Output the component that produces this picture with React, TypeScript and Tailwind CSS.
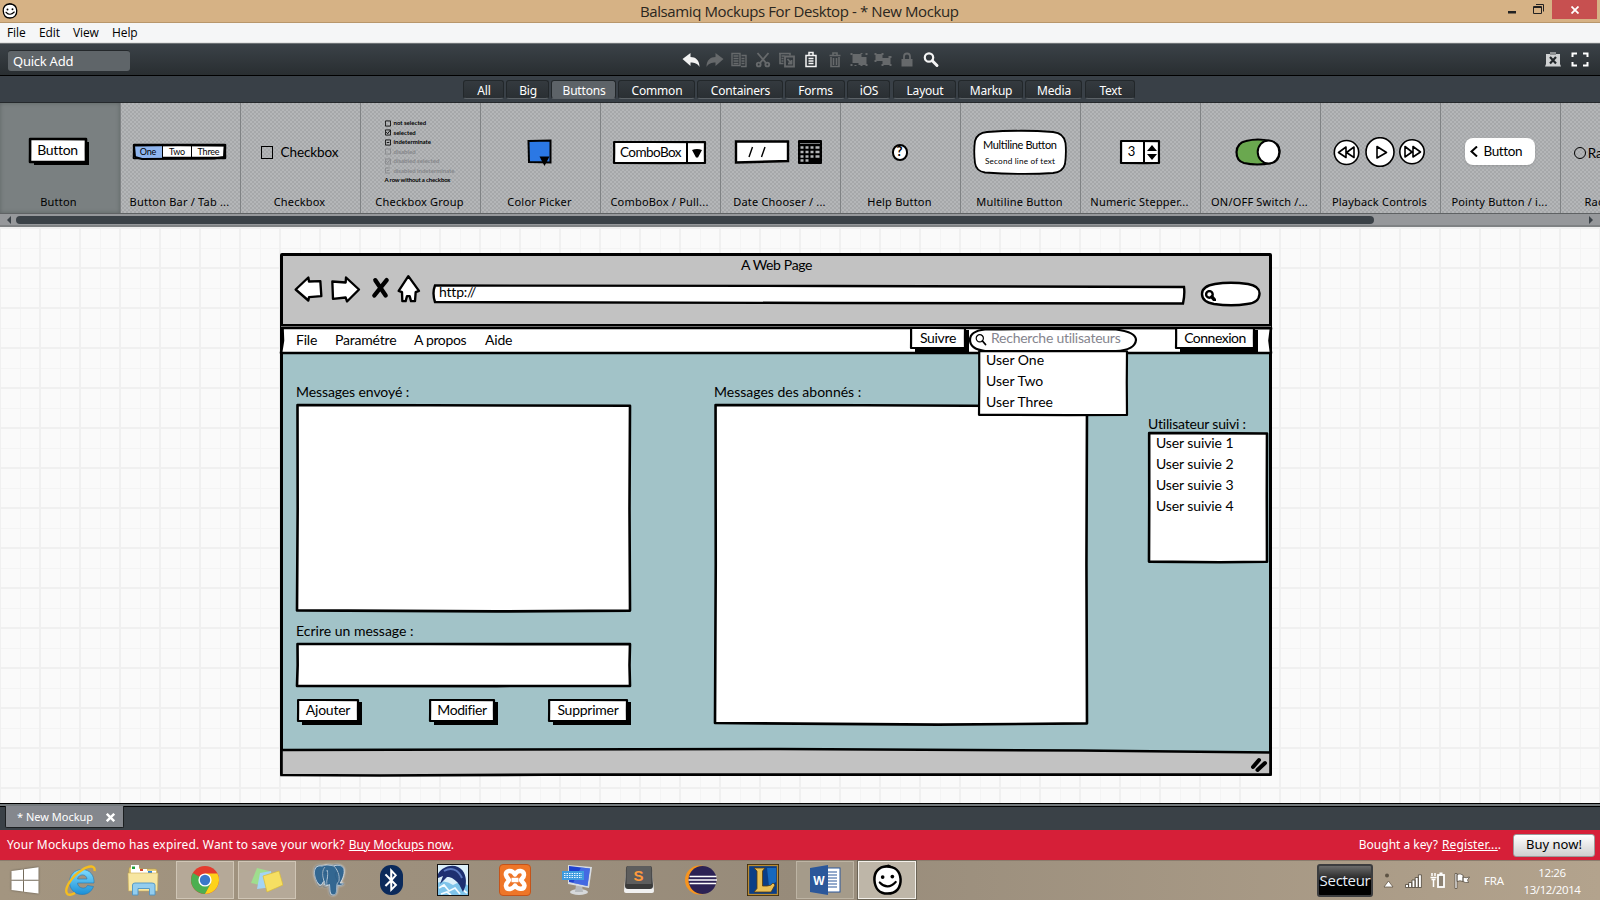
import React from 'react';
import type { ReactNode } from 'react';
import { SiPostgresql } from 'react-icons/si';
import { FaBluetoothB } from 'react-icons/fa';

const HAND = "font-['Lato','Liberation_Sans',sans-serif]";

/* Hand-drawn rectangle that stretches to its container. */
function Outline({ fill = '#fff', weight = 2.6 }: { fill?: string; weight?: number }) {
  return (
    <svg className="absolute inset-0 h-full w-full overflow-visible" viewBox="0 0 100 100" preserveAspectRatio="none">
      <path
        d="M0.150 0L40 0.100L100 0.400L99.850 50L100 99.800L60 100.200L0 99.700L0.200 50Z"
        fill={fill}
        stroke="#000"
        strokeWidth={weight}
        strokeLinejoin="round"
        vectorEffect="non-scaling-stroke"
      />
    </svg>
  );
}

function Note({ at, children }: { at: string; children: ReactNode }) {
  return <div className={`absolute whitespace-nowrap text-sm leading-5 text-black ${at}`}>{children}</div>;
}

function SketchButton({ at, text, children }: { at: string; text: string; children: ReactNode }) {
  return (
    <div className={`absolute ${at}`}>
      <div className="absolute top-[2px] -right-[4px] -bottom-[4px] left-[4px] bg-black" />
      <Outline weight={2.2} />
      <div className={`relative flex h-full items-center justify-center pb-px text-sm leading-5 whitespace-nowrap ${text}`}>{children}</div>
    </div>
  );
}

function Smiley({ size }: { size: string }) {
  return (
    <svg className={size} viewBox="0 0 32 32">
      <path d="M15 2C7 2 2 8 2.500 16C3 25 8 30 16 30C25 30 30 24 29.500 15C29 7 24 2 15 2Z" fill="#fff" stroke="#000" strokeWidth="2.600" />
      <path d="M13 2L17 0.800L21 3" fill="none" stroke="#000" strokeWidth="1.500" />
      <circle cx="11" cy="13" r="1.900" />
      <circle cx="21" cy="12.500" r="1.900" />
      <path d="M8 18.500Q16 27 24.500 18" fill="none" stroke="#000" strokeWidth="2.200" strokeLinecap="round" />
    </svg>
  );
}

/* ---------- toolbar ---------- */

const DIM = '#66696b';
const tools: ReactNode[] = [
  <path key="undo" d="M1 9L9 3V7C14 7 18 10 18 17C16 13.500 13 12.500 9 12.500V16Z" fill="#f2f2f2" />,
  <path key="redo" d="M18 9L10 3V7C5 7 1 10 1 17C3 13.500 6 12.500 10 12.500V16Z" fill={DIM} />,
  <g key="copy" fill="none" stroke={DIM} strokeWidth="1.400">
    <path d="M2.500 3.500H10.500V15.500H2.500ZM12 5.500H16.500V16.500H11.500M4 6H9M4 8.500H9M4 11H9M4 13.500H9M12 8.500H15M12 11H15M12 13.500H15" />
  </g>,
  <g key="cut" fill="none" stroke={DIM} strokeWidth="1.900">
    <path d="M4 3L12.500 13M15 3L6.500 13" />
    <circle cx="5.200" cy="14.500" r="1.900" />
    <circle cx="13.800" cy="14.500" r="1.900" />
  </g>,
  <g key="duplicate" fill="none" stroke={DIM} strokeWidth="1.600">
    <path d="M1.500 3.500H12.500V5.500M2.500 3.500V13.500H6M4 6H7M4 8.500H6M4 11H6" />
    <path d="M7.500 6.500H16.500V16.500H7.500ZM10 9L14 13.500M14 10V13.500H10.500" strokeWidth="1.800" />
  </g>,
  <g key="paste" fill="none" stroke="#f4f4f4" strokeWidth="1.500">
    <path d="M4.500 5.500H14.500V16.500H4.500Z" />
    <path d="M7.500 5V2.500H11.500V5M7 8.500H12M7 11H12M7 13.500H12" />
  </g>,
  <g key="trash" fill="none" stroke={DIM} strokeWidth="1.600">
    <path d="M4 5.500H15M7.500 5V3H11.500V5M5.500 7V16.500H13.500V7M8 8V15M11 8V15" />
  </g>,
  <g key="group" fill={DIM}>
    <path d="M3 4H12V13H3ZM9 7H17V15H9Z" />
    <path d="M1 3H3V5H1ZM16 3H18V5H16ZM1 14H3V16H1ZM16 14H18V16H16ZM11 3H13V4H11ZM5 15H7V16H5ZM11 15H13V16H11Z" />
  </g>,
  <g key="ungroup" fill={DIM}>
    <path d="M2 4H9V11H2ZM9 8H17V15H9Z" />
    <path d="M1 3H3V5H1ZM8 3H10V5H8ZM1 10H3V12H1ZM15 6H18V8H15ZM8 14H10V16H8ZM16 14H18V16H16Z" />
  </g>,
  <g key="lock">
    <path d="M4 9H15V16.500H4Z" fill={DIM} />
    <path d="M6.500 9V6.500C6.500 2.500 12.500 2.500 12.500 6.500V9" fill="none" stroke={DIM} strokeWidth="1.800" />
  </g>,
  <g key="find" fill="none" stroke="#f4f4f4">
    <circle cx="7.500" cy="7.500" r="4.200" strokeWidth="2.200" />
    <path d="M10.800 10.800L15.500 15.500" strokeWidth="3" strokeLinecap="round" />
  </g>,
];

/* ---------- category tabs ---------- */

const tabs: [string, string][] = [
  ['All', 'ml-[463px] w-[41px]'],
  ['Big', 'ml-[2px] w-[43px]'],
  ['Buttons', 'ml-[2px] w-[65px]'],
  ['Common', 'ml-[2px] w-[77px]'],
  ['Containers', 'ml-[2px] w-[86px]'],
  ['Forms', 'ml-[2px] w-[60px]'],
  ['iOS', 'ml-[2px] w-[43px]'],
  ['Layout', 'ml-[3px] w-[63px]'],
  ['Markup', 'ml-[2px] w-[65px]'],
  ['Media', 'ml-[2px] w-[57px]'],
  ['Text', 'ml-[3px] w-[50px]'],
];

/* ---------- palette ---------- */

const groupRows: [string, string, boolean][] = [
  ['not selected', '', false],
  ['selected', 'M1.500 3L3 5L6 1', false],
  ['indeterminate', 'M2 3.500H5', false],
  ['disabled', '', true],
  ['disabled selected', 'M1.500 3L3 5L6 1', true],
  ['disabled indeterminate', 'M2 3.500H5', true],
];

const palette: [string, ReactNode][] = [
  [
    'Button',
    <div className="relative -mt-0.5 -ml-0.5 h-[23px] w-[56px]">
      <div className="absolute top-[3px] -right-[3px] -bottom-[3px] left-[4px] bg-black" />
      <Outline />
      <div className="relative text-center text-sm leading-[22px] tracking-[-0.3px]">Button</div>
    </div>,
  ],
  [
    'Button Bar / Tab ...',
    <div className="relative h-[13px] w-[91px]">
      <Outline />
      <div className="relative flex h-full text-center text-[9px] leading-[13px] tracking-[-0.2px]">
        <span className="w-[29px] border-r border-black bg-[#8fb5ee]">One</span>
        <span className="w-[29px] border-r border-black">Two</span>
        <span className="grow">Three</span>
      </div>
      <svg className="absolute inset-0 h-full w-full overflow-visible" viewBox="0 0 91 13">
        <path d="M0 0.500L45 0L91 0.500L90 12L80 13.500L8 14L1 12Z" fill="none" stroke="#000" strokeWidth="2" />
      </svg>
    </div>,
  ],
  [
    'Checkbox',
    <div className="flex items-center gap-2 pt-px text-[13.5px] tracking-[-0.1px]">
      <div className="h-[13px] w-[12px] border-[1.500px] border-black" />
      Checkbox
    </div>,
  ],
  [
    'Checkbox Group',
    <div className="flex w-[70px] flex-col text-[6px] leading-[9.500px] font-bold whitespace-nowrap">
      {groupRows.map(([t, d, off]) => (
        <div key={t} className={off ? 'flex items-center gap-[3px] text-[#85878a]' : 'flex items-center gap-[3px]'}>
          <svg className="h-[7px] w-[6px]" viewBox="0 0 7 7" fill="none" stroke="currentColor">
            <path d="M0.500 0.500H6.500V6.500H0.500Z" />
            <path d={d} />
          </svg>
          {t}
        </div>
      ))}
      <div className="tracking-[-0.15px]">A row without a checkbox</div>
    </div>,
  ],
  [
    'Color Picker',
    <svg className="mt-px h-[27px] w-[25px]" viewBox="0 0 25 27">
      <path d="M1.500 2L23.500 1.500V23.500L2 23Z" fill="#2b78e4" stroke="#000" strokeWidth="2" />
      <path d="M12.500 17.500H22.500L17.500 27Z" />
    </svg>,
  ],
  [
    'ComboBox / Pull...',
    <div className="relative mt-px h-[21px] w-[91px]">
      <Outline weight={2.2} />
      <div className="relative flex h-full text-[13.5px] leading-[20px] tracking-[-0.55px]">
        <span className="w-[74px] border-r-2 border-black pl-[6px]">ComboBox</span>
        <svg className="mt-[7px] ml-[4px] h-[9px] w-[10px]" viewBox="0 0 10 9">
          <path d="M0 1Q5 -1 10 1L6 8.500H4Z" />
        </svg>
      </div>
    </div>,
  ],
  [
    'Date Chooser / ...',
    <svg className="mt-px -ml-1 h-[26px] w-[88px]" viewBox="0 0 88 26">
      <path d="M2 2.500L54 2.500L54 22L2 23.500Z" fill="#fff" stroke="#000" strokeWidth="2.400" />
      <path d="M18.500 8L15 18M31 8L27.500 18" stroke="#000" strokeWidth="1.400" />
      <rect x="64" y="1" width="24" height="24" rx="1" />
      <path d="M66.500 8.500h3M71.500 8.500h3M76.500 8.500h3M81.500 8.500h4M66.500 13h3M71.500 13h3M76.500 13h3M81.500 13h4M66.500 17.500h3M71.500 17.500h3M76.500 17.500h3M81.500 17.500h4M66.500 21.500h3M71.500 21.500h3" stroke="#b3b5b7" strokeWidth="2.400" />
      <path d="M66 4.500H86" stroke="#77797b" strokeWidth="1" />
    </svg>,
  ],
  [
    'Help Button',
    <div className="relative mt-px flex h-[17px] w-[16px] items-center justify-center rounded-full border-2 border-black bg-white text-[13px] font-bold">?</div>,
  ],
  [
    'Multiline Button',
    <svg className="mt-px h-[46px] w-[94px]" viewBox="0 0 94 46">
      <path d="M14 3Q50 0.500 80 3Q91 4 92.500 14Q93.500 24 92 35Q90 43 80 44Q50 46 12 43.500Q3 42 2 34Q0.500 22 2 12Q4 4 14 3Z" fill="#fff" stroke="#000" strokeWidth="1.800" />
      <text x="47" y="20" textAnchor="middle" fontSize="11" textLength="74">Multiline Button</text>
      <text x="47" y="35" textAnchor="middle" fontSize="8.200" textLength="70">Second line of text</text>
    </svg>,
  ],
  [
    'Numeric Stepper...',
    <div className="relative mt-px h-[22px] w-[38px]">
      <Outline weight={2.2} />
      <div className="relative flex h-full text-[13px] leading-[21px]">
        <span className="w-[24px] border-r-2 border-black text-center">3</span>
        <svg className="mt-[4px] ml-[2px] h-[15px] w-[10px]" viewBox="0 0 10 15">
          <path d="M0 6L5 0L10 6ZM0 9H10L5 15Z" />
        </svg>
      </div>
    </div>,
  ],
  [
    'ON/OFF Switch /...',
    <svg className="mt-px -ml-1 h-[28px] w-[46px]" viewBox="0 0 46 28">
      <path d="M11 3Q23 0 35 3Q45 5 44.500 14Q44 24 36 25Q22 28 9 25Q1.500 23 1.500 14Q2 5 11 3Z" fill="#6aa84f" stroke="#000" strokeWidth="2.200" />
      <ellipse cx="33.500" cy="14" rx="10.800" ry="11.500" fill="#fff" stroke="#000" strokeWidth="2" />
    </svg>,
  ],
  [
    'Playback Controls',
    <svg className="mt-px h-[31px] w-[93px]" viewBox="0 0 93 31" fill="#fff" stroke="#000" strokeWidth="1.600" strokeLinejoin="round">
      <ellipse cx="13.500" cy="15.500" rx="12.200" ry="12" />
      <ellipse cx="47" cy="15" rx="14" ry="14.300" />
      <ellipse cx="79" cy="14.800" rx="12.200" ry="12" />
      <path d="M13 10L5.500 15.500L13 20.500ZM21 10L13.500 15.500L21 20.500ZM44 9.500L53.500 15.500L44 21ZM72 9.500V20L79 15ZM80 9.500V20L87.500 15Z" />
    </svg>,
  ],
  [
    'Pointy Button / i...',
    <div className="flex h-[27px] w-[70px] items-center gap-[6px] rounded-[8px] bg-white pl-[5px] text-[13.500px] tracking-[-0.4px] shadow">
      <svg className="h-[11px] w-[8px]" viewBox="0 0 8 11" fill="none" stroke="#000" strokeWidth="2">
        <path d="M7 0.500L1.500 5.500L7 10.500" />
      </svg>
      Button
    </div>,
  ],
  [
    'Radio Button',
    <div className="flex items-center gap-[2px] pt-[3px] text-[13.500px] whitespace-nowrap">
      <div className="h-[12px] w-[12px] rounded-full border border-black" />
      Radio Button
    </div>,
  ],
];

/* ---------- taskbar icons ---------- */

const apps: [ReactNode, string][] = [
  [
    <svg className="h-8 w-8" viewBox="0 0 32 32">
      <defs>
        <linearGradient id="ie" x1="0" y1="0" x2="0" y2="1">
          <stop offset="0" stopColor="#7fdcff" />
          <stop offset="1" stopColor="#1b8fd6" />
        </linearGradient>
      </defs>
      <path d="M29 19H12.500C13 25 21 25.500 22.500 21.500L28.500 22.500C26 29 21 30.500 17 30.500C9 30.500 4.500 24.500 4.500 18C4.500 11 9.500 5.500 17 5.500C25 5.500 29.500 11.500 29 19ZM12.500 15H22C21.500 9.500 13.500 9.500 12.500 15Z" fill="url(#ie)" stroke="#2278b5" strokeWidth="0.600" />
      <path d="M29.500 7C30.500 2 25 0.500 17 6C6 13 -1 25 2 29.500C3 31.500 7 31 10 29" fill="none" stroke="#f5bd1f" strokeWidth="2.400" />
    </svg>,
    '',
  ],
  [
    <svg className="h-8 w-8" viewBox="0 0 32 32">
      <path d="M2 5Q2 3 4 3H12L14 5H28Q30 5 30 7V26H2Z" fill="#e8cf78" stroke="#b99a44" strokeWidth="0.600" />
      <path d="M4 1H12V5H20V7H29V10H4Z" fill="#fff" />
      <path d="M5 2.500H8V5H5Z" fill="#1da03c" />
      <path d="M13 5H16V7H13Z" fill="#d4482b" />
      <path d="M21 7H25V9H21Z" fill="#2f87d8" />
      <path d="M1 9H31L30.500 27H1.500Z" fill="#f7e6a1" stroke="#c9ac58" strokeWidth="0.600" />
      <path d="M5.500 31V21Q5.500 19 8 19H25Q28 19 28 21V31H22.500V24.500H11V31Z" fill="#93cdee" stroke="#4d94c4" strokeWidth="0.900" />
    </svg>,
    '',
  ],
  [
    <svg className="h-[30px] w-[30px]" viewBox="0 0 30 30">
      <circle cx="15" cy="15" r="14" fill="#e33b2e" />
      <path d="M15 15L2.900 8A14 14 0 0 0 15 29L21 18.500Z" fill="#4caf50" />
      <path d="M15 8.500H27.400A14 14 0 0 1 15 29L21 18Z" fill="#fdd21b" />
      <circle cx="15" cy="15" r="6.600" fill="#fff" />
      <circle cx="15" cy="15" r="5.200" fill="#3a78c9" />
    </svg>,
    'border border-[#cfc5b5] bg-[#b5a998]',
  ],
  [
    <svg className="h-7 w-8" viewBox="0 0 32 28">
      <path d="M6 2L18 5L14 20L0 17Z" fill="#9fdd8e" />
      <path d="M9 7L20 5L22 21L6 23Z" fill="#a3d4f4" />
      <path d="M12 10L28 5L32 19L16 26Z" fill="#f6df62" stroke="#d8ba3a" strokeWidth="0.700" />
    </svg>,
    'border border-[#cfc5b5] bg-[#b5a998]',
  ],
  [
    <div className="grid h-8 w-8 drop-shadow-[0_0_1px_#e9edf0]">
      <svg className="col-start-1 row-start-1 h-8 w-8" viewBox="0 0 32 32" fill="#336791" stroke="#d9e2ea" strokeWidth="0.800">
        <path d="M9 2C3 1 1 5 1.500 10C2 15 5 21 7.500 21C9.500 21 10 17 11 17L12 19Q10 21 14 21.500L16.500 20.500C17 25 16.500 31 20 31C24 31 23.500 27 24 21C27 22 29 21 30.500 20C30 18.500 28 19.500 27 19C30 15 32 8 30.500 4C28.500 1 24 0.500 21 2C17 1 13 0.500 9 2Z" />
        <path d="M11 17C9 12 9 6 12 3M21 2C24 5 27 11 26 17C25 19 24 19 24 21M14 21.500C13 15 16 13 14 6" fill="none" />
      </svg>
      <SiPostgresql className="col-start-1 row-start-1 h-8 w-8 text-[#274f74] opacity-30" />
    </div>,
    '',
  ],
  [
    <div className="flex h-[30px] w-[23px] items-center justify-center rounded-[11px] bg-[#0b2a5b]">
      <FaBluetoothB className="h-[24px] w-[18px] text-white" />
    </div>,
    '',
  ],
  [
    <svg className="h-8 w-8" viewBox="0 0 32 32">
      <rect width="32" height="32" fill="#dcf0fa" />
      <path d="M0 19Q8 15 16 21Q24 16 32 22V32H0Z" fill="#7fc4ea" />
      <path d="M2 24L7 21L12 27L18 24L23 30M4 30L10 28L14 31M26 26L30 29" stroke="#f3fbff" strokeWidth="1.800" fill="none" />
      <path d="M1 10C5 3 14 0 21 3C28 6 30 15 28.500 22L26 28L22.500 21C20 17 16 14 12 13L10 13L3 20L6 12L1 14Z" fill="#1d2f70" />
      <path d="M7 7C14 3 21 5 25 14" stroke="#5c79bf" strokeWidth="2" fill="none" />
      <rect x="0.500" y="0.500" width="31" height="31" fill="none" stroke="#111" />
    </svg>,
    '',
  ],
  [
    <div className="flex h-8 w-8 items-center justify-center rounded-[4px] border border-[#c4541a] bg-[#ee7628]">
      <svg className="h-6 w-6" viewBox="0 0 24 24" fill="none" stroke="#fff" strokeWidth="4.500" strokeLinejoin="round">
        <path d="M12 6.500C9 1 2 2.500 3 7C3.500 9.500 6 11 6 12C6 13 2.500 15 3 18C4 23 10 21 12 17.500C14 21 21 22.500 21.500 17.500C21.500 15 18 13 18 12C18 11 21 9.500 21 7C21 2.500 15 1 12 6.500ZM8.500 12H15.500" />
      </svg>
    </div>,
    '',
  ],
  [
    <svg className="h-8 w-8" viewBox="0 0 32 32">
      <ellipse cx="18" cy="28" rx="9" ry="3" fill="#d7d9db" />
      <path d="M15 21H21L22 28H14Z" fill="#b7babd" />
      <path d="M7 1L31 3L28 24L7 20Z" fill="#d8dce1" />
      <path d="M8 2L29 4.500L26.500 22L8 18Z" fill="#1f41cf" />
      <path d="M20 3.500L29 4.500L26.500 22L12 19Z" fill="#5d84ef" opacity="0.600" />
      <rect x="1" y="7" width="22" height="9" fill="#3f9bdf" />
      <path d="M3 9.500H21M3 11.500H21M3 13.500H21" stroke="#e9f5ff" strokeDasharray="1.500 1" />
    </svg>,
    '',
  ],
  [
    <svg className="h-8 w-8" viewBox="0 0 32 32">
      <path d="M3 7L1 27Q1 29 3 29H29Q31 29 31 27L29 7Z" fill="#f1f1f1" />
      <path d="M5 2H27Q29 2 29 5L30 22Q30 25 27 25H5Q2 25 2 22L3 5Q3 2 5 2Z" fill="#3a3a3a" />
      <path d="M5 2H27Q28.500 2 28.500 5L28.500 20H3.500L3.500 5Q3.500 2 5 2Z" fill="#5d5d5d" />
      <text x="15.500" y="17" textAnchor="middle" fontFamily="Liberation Sans" fontWeight="700" fontSize="15" fill="#ff9a3c">S</text>
    </svg>,
    '',
  ],
  [
    <svg className="h-8 w-8" viewBox="0 0 32 32">
      <circle cx="14.500" cy="16" r="14.500" fill="#f7941e" />
      <circle cx="17.500" cy="16" r="14" fill="#2c2255" />
      <path d="M4.500 12.500H31.500M3.500 16H32M4.500 19.500H31" stroke="#fff" strokeWidth="1.600" />
    </svg>,
    '',
  ],
  [
    <svg className="h-8 w-8" viewBox="0 0 32 32">
      <rect width="32" height="32" fill="#3a2a10" />
      <rect x="1.500" y="1.500" width="29" height="29" fill="#0b3e86" stroke="#b98b32" strokeWidth="1.300" />
      <path d="M20 4H29V18L22 22Z" fill="#1668bd" />
      <path d="M7 4H18L15.500 7V22H20Q24 22 26 19L28 21L24 28H7L10 24.500V7Z" fill="#e9bf55" stroke="#5a3c0c" strokeWidth="0.800" />
    </svg>,
    '',
  ],
  [
    <svg className="h-8 w-8" viewBox="0 0 32 32">
      <rect x="15" y="4" width="16" height="24" fill="#fff" stroke="#2b579a" />
      <path d="M18 8H28M18 11H28M18 14H28M18 17H28M18 20H28M18 23H28" stroke="#2b579a" strokeWidth="1.200" />
      <path d="M1 4L19 1V31L1 28Z" fill="#2b579a" />
      <text x="9.800" y="20.500" textAnchor="middle" fontFamily="Liberation Sans" fontWeight="700" fontSize="12" fill="#fff">W</text>
    </svg>,
    'border border-[#bdb4a4] bg-[#a59b8a]',
  ],
  [<Smiley size="h-[32px] w-[31px]" />, 'border border-[#f3f0ea] bg-[#beb6a8] outline outline-[#6b6456]'],
];

function Magnifier({ at, weight }: { at: string; weight: number }) {
  return (
    <svg className={`absolute ${at}`} viewBox="0 0 12 12" fill="none" stroke="#000" strokeWidth={weight} strokeLinecap="round">
      <circle cx="4.800" cy="4.800" r="3.600" />
      <path d="M7.500 7.500L10.500 11" strokeWidth={weight * 1.500} />
    </svg>
  );
}

function Canvas() {
  return (
    <main
      className={`relative h-[577px] overflow-hidden bg-[#fafafa] bg-[linear-gradient(#f0f0f0_2px,transparent_2px),linear-gradient(90deg,#f0f0f0_2px,transparent_2px),linear-gradient(#f4f4f4_1px,transparent_1px),linear-gradient(90deg,#f4f4f4_1px,transparent_1px)] bg-[size:40px_40px,40px_40px,20px_20px,20px_20px] bg-[position:0_0,-1px_0,0_1px,0_0] ${HAND}`}
    >
      {/* browser window */}
      <div className="absolute top-[26px] left-[280px] h-[523px] w-[992px] rounded-[2px] border-[3px] border-black bg-[#a2c3c8]" />
      <div className="absolute top-[29px] left-[283px] h-[69px] w-[986px] bg-[#c2c2c2]" />
      <svg className="absolute top-[518px] left-[280px] h-[32px] w-[992px] overflow-visible" viewBox="0 0 992 32">
        <path d="M1.500 5L500 4L800 5.500L990.500 7.500V29.500L700 29.500L300 29.500L100 30.500L1.500 30Z" fill="#c2c2c2" stroke="#000" strokeWidth="2.600" />
        <path d="M973 22L979 15M977.500 25L985 18" stroke="#000" strokeWidth="4" strokeLinecap="round" />
      </svg>
      <Note at="top-[28px] left-[741px] tracking-[-0.35px]">A Web Page</Note>
      <svg className="absolute top-[47px] left-[293px] h-[31px] w-[130px]" viewBox="70 101.500 390 93" fill="#fff" stroke="#000" strokeWidth="7" strokeLinejoin="round" strokeLinecap="round">
        <path d="M78 148L116 112L118 124L152 123L155 168L118 171L116 181Z" />
        <path d="M188 124L228 127L229 112L268 148L232 184L228 172L190 176Z" />
        <path d="M317 120L348 166M351 120L314 166" strokeWidth="13" />
        <path d="M416 108L448 152L438 156L436 183H424L420 168H412L408 183H398L397 156L387 152Z" />
      </svg>
      <svg className="absolute top-[57px] left-[432px] h-[21px] w-[754px]" viewBox="0 0 754 21">
        <path d="M3 1.500L400 2L752 3Q753 10 751 19.500L400 19L3 18Q0 9 3 1.500Z" fill="#fff" stroke="#000" strokeWidth="2.400" />
      </svg>
      <Note at="top-[55px] left-[439px] tracking-[-0.2px]">http://</Note>
      <svg className="absolute top-[54px] left-[1200px] h-[26px] w-[61px]" viewBox="0 0 61 26">
        <path d="M15 3Q30 0.500 48 3Q60 5 59.500 13Q59 22 47 23Q32 25.500 14 23Q2 21 2 13Q2 5 15 3Z" fill="#fff" stroke="#000" strokeWidth="2.400" />
      </svg>
      <Magnifier at="top-[63px] left-[1205px] h-[11px] w-[11px]" weight={2.6} />

      {/* menu bar */}
      <div className="absolute top-[101px] left-[281px] h-[25px] w-[990px]">
        <Outline weight={2.600} />
      </div>
      <div className="absolute top-[97px] left-[281px] h-[2px] w-[990px] bg-black" />
      <div className="absolute top-[99px] left-[281px] h-px w-[990px] bg-[#6a6a6a]" />
      <Note at="top-[103px] left-[296px] tracking-[-0.2px]">File</Note>
      <Note at="top-[103px] left-[335px] tracking-[-0.2px]">Paramétre</Note>
      <Note at="top-[103px] left-[414px] tracking-[-0.35px]">A propos</Note>
      <Note at="top-[103px] left-[485px] tracking-[-0.2px]">Aide</Note>
      <SketchButton at="top-[101px] left-[911px] h-[20px] w-[54px]" text="tracking-[-0.3px]">Suivre</SketchButton>
      <svg className="absolute top-[101px] left-[968px] h-[25px] w-[170px]" viewBox="0 0 170 25">
        <path d="M17 1.500Q80 0.500 148 1.500Q168 4 168 12Q167 22 148 23H17Q2 21 2 12Q2 3 17 1.500Z" fill="#fff" stroke="#000" strokeWidth="2.200" />
      </svg>
      <Magnifier at="top-[106px] left-[975px] h-[13px] w-[12px]" weight={1.200} />
      <Note at="top-[101px] left-[991px] tracking-[-0.25px] text-[#85858e]!">Recherche utilisateurs</Note>
      <SketchButton at="top-[101px] left-[1176px] h-[20px] w-[78px]" text="tracking-[-0.5px]">Connexion</SketchButton>

      {/* message columns */}
      <Note at="top-[155px] left-[296px] tracking-[-0.1px]">Messages envoyé :</Note>
      <div className="absolute top-[178px] left-[297px] h-[206px] w-[333px]">
        <Outline />
      </div>
      <Note at="top-[394px] left-[296px]">Ecrire un message :</Note>
      <div className="absolute top-[417px] left-[297px] h-[42px] w-[333px]">
        <Outline />
      </div>
      <SketchButton at="top-[473px] left-[298px] h-[21px] w-[60px]" text="tracking-[-0.25px]">Ajouter</SketchButton>
      <SketchButton at="top-[473px] left-[430px] h-[21px] w-[64px]" text="tracking-[-0.4px]">Modifier</SketchButton>
      <SketchButton at="top-[473px] left-[549px] h-[21px] w-[78px]" text="tracking-[-0.25px]">Supprimer</SketchButton>

      <Note at="top-[155px] left-[714px]">Messages des abonnés :</Note>
      <div className="absolute top-[178px] left-[715px] h-[319px] w-[372px]">
        <Outline />
      </div>

      {/* search suggestions */}
      <div className="absolute top-[124px] left-[979px] h-[64px] w-[148px]">
        <Outline weight={2.2} />
        <div className="relative -top-[2px] pl-[7px] text-sm leading-[21px]">
          <div>User One</div>
          <div>User Two</div>
          <div>User Three</div>
        </div>
      </div>

      {/* followed users */}
      <Note at="top-[187px] left-[1148px] tracking-[-0.2px]">Utilisateur suivi :</Note>
      <div className="absolute top-[206px] left-[1149px] h-[129px] w-[118px]">
        <Outline />
        <div className="relative -top-px pl-[7px] text-sm leading-[21px] tracking-[-0.1px]">
          <div>User suivie 1</div>
          <div>User suivie 2</div>
          <div>User suivie 3</div>
          <div>User suivie 4</div>
        </div>
      </div>
    </main>
  );
}

export default function App() {
  return (
    <div className="flex h-[900px] w-[1600px] flex-col overflow-hidden bg-[#3a4147] font-['Noto_Sans','Open_Sans',sans-serif]">
      {/* title bar */}
      <header className="relative flex h-[23px] shrink-0 items-center border-b border-[#b8976c] bg-[#d6b285] pl-[2px]">
        <Smiley size="h-[16px] w-[16px]" />
        <h1 className="ml-[622px] font-['Open_Sans'] text-[15px] leading-5 tracking-[-0.4px] whitespace-nowrap text-[#2a2620]">
          Balsamiq Mockups For Desktop - * New Mockup
        </h1>
        <div className="ml-auto flex h-full items-start">
          <svg className="h-[19px] w-[44px]" viewBox="0 0 44 19">
            <path d="M0 11H8V13.500H0Z" fill="#222" />
            <path d="M25.500 6.500H33.500V13.500H25.500ZM25.500 7.500H33M28 4.500H35.500V11.500" fill="none" stroke="#222" />
          </svg>
          <div className="mr-[3px] flex h-[19px] w-[45px] items-center justify-center bg-[#c75050]">
            <svg className="h-[8px] w-[8px]" viewBox="0 0 8 8" stroke="#fff" strokeWidth="1.800">
              <path d="M0.500 0.500L7.500 7.500M7.500 0.500L0.500 7.500" />
            </svg>
          </div>
        </div>
      </header>

      <nav className="relative h-[20px] shrink-0 border-b border-[#e3e3e3] bg-[#f5f6f7] font-['Open_Sans'] text-xs leading-[19px] tracking-[-0.1px] text-black">
        <div className="flex pl-[7px]">
          <span className="w-[32px]">File</span>
          <span className="w-[34px]">Edit</span>
          <span className="w-[39px]">View</span>
          <span>Help</span>
        </div>
      </nav>

      {/* toolbar */}
      <div className="flex h-[33px] shrink-0 items-center border-t border-b border-t-[#6d7275] border-b-black bg-linear-to-b from-[#3b4248] to-[#292e31] pl-[8px]">
        <div className="mt-px h-[21px] w-[122px] rounded-[3px] border-t border-[#24282b] bg-[#5f6569] pl-[5px] text-[13px] leading-[20px] tracking-[-0.25px] text-white">
          Quick Add
        </div>
        <div className="ml-[549px] flex">
          {tools.map((tool, i) => (
            <svg key={i} className="h-[20px] w-[24px]" viewBox="-2.500 0 24 20">
              {tool}
            </svg>
          ))}
        </div>
        <div className="mr-[11px] ml-auto flex gap-[10px]">
          <svg className="h-[15px] w-[16px]" viewBox="0 0 16 15">
            <path d="M1 2H15V12L16 14.500H0L1 12Z" fill="#cfd1d2" />
            <rect x="5" y="0" width="6" height="3" fill="#8e9193" />
            <path d="M5 5L11 11.500M11 5L5 11.500" stroke="#23282b" strokeWidth="2.200" />
          </svg>
          <svg className="h-[15px] w-[18px]" viewBox="0 0 18 15" fill="none" stroke="#fff" strokeWidth="2">
            <path d="M1.500 5V1.500H6M12 1.500H16.500V5M16.500 10V13.500H12M6 13.500H1.500V10" />
          </svg>
        </div>
      </div>

      {/* categories */}
      <div className="flex h-[27px] shrink-0 border-b border-[#25292c] bg-[#394047] pt-[4px]">
        {tabs.map(([name, box]) => (
          <div
            key={name}
            className={`h-[19px] shrink-0 rounded-[3px] border border-[#22272a] border-b-[#5c6267] pl-px text-center text-xs leading-[20px] tracking-[-0.2px] text-white ${box} ${
              name === 'Buttons' ? 'bg-[#5d6368]' : 'bg-linear-to-b from-[#343a3f] to-[#2a2f33]'
            }`}
          >
            {name}
          </div>
        ))}
      </div>

      {/* widget palette */}
      <div className="flex h-[111px] shrink-0 overflow-hidden border-b border-[#5f6264] bg-[#adafb1] bg-[conic-gradient(#a6a8aa_25%,#b4b6b8_0_50%,#a6a8aa_0_75%,#b4b6b8_0)] bg-[size:4px_4px]">
        {palette.map(([name, art], i) => (
          <div
            key={name}
            className={`flex h-full w-[120px] shrink-0 flex-col border-r border-[#808385] pr-px ${i === 0 ? 'w-[121px]! bg-[#7a8081] pr-[2px]! shadow-[inset_0_0_4px_#5e6465]' : ''}`}
          >
            <div className={`flex h-[91px] items-center justify-center pt-[6px] pr-px text-black ${HAND}`}>{art}</div>
            <div className="pr-px text-center text-[11px] leading-[16px] tracking-[0.2px] whitespace-nowrap text-black">{name}</div>
          </div>
        ))}
      </div>

      <div className="flex h-[13px] shrink-0 items-center border-b-2 border-[#7f8284] bg-[#96989b] px-[7px]">
        <svg className="h-[8px] w-[4px]" viewBox="0 0 4 8" fill="#3a4147">
          <path d="M4 0V8L0 4Z" />
        </svg>
        <div className="ml-[5px] h-[8px] w-[1358px] rounded-full bg-[#3a4147]" />
        <svg className="ml-auto h-[8px] w-[4px]" viewBox="0 0 4 8" fill="#3a4147">
          <path d="M0 0V8L4 4Z" />
        </svg>
      </div>

      <Canvas />

      {/* document tabs */}
      <div className="flex h-[27px] shrink-0 flex-col bg-[#3a4147]">
        <div className="h-[4px] shrink-0 border-t border-b border-black bg-[#747a7d]" />
        <div className="-mt-px ml-[5px] flex h-[22px] w-[119px] items-center rounded-b-[2px] border border-t-0 border-[#1b1e20] bg-[#84878d] pt-px pl-[11px] text-[11px] text-white">
          * New Mockup
          <svg className="ml-[13px] h-[9px] w-[9px]" viewBox="0 0 9 9" stroke="#fff" strokeWidth="2.400">
            <path d="M0.800 0.800L8.200 8.200M8.200 0.800L0.800 8.200" />
          </svg>
        </div>
      </div>

      {/* licence banner */}
      <div className="flex h-[30px] shrink-0 items-center bg-[#d61f38] pl-[7px] text-xs text-white">
        <span className="tracking-[0.18px]">Your Mockups demo has expired. Want to save your work?</span>
        <span className="ml-[4px]">
          <span className="underline">Buy Mockups now</span>.
        </span>
        <span className="mr-[4px] ml-auto">Bought a key?</span>
        <span className="tracking-[0.15px] underline">Register...</span>
        <span>.</span>
        <div className="mr-[5px] ml-[12px] flex h-[23px] w-[82px] items-center justify-center rounded-[3px] border border-[#9b9b9b] bg-linear-to-b from-white to-[#cfcfcf] text-[13px] text-black">
          Buy now!
        </div>
      </div>

      {/* taskbar */}
      <footer className="flex h-[40px] shrink-0 border-t border-[#8c7c6d] bg-linear-to-r from-[#a39580] via-[#978b7a] to-[#b3a38d]">
        <div className="flex w-[52px] items-center pl-[11px]">
          <svg className="h-[27px] w-[28px] drop-shadow-[0_0_1px_#5c5548]" viewBox="0 0 28 27" fill="#fff">
            <path d="M0.500 4L12 2.400V12.800H0.500ZM13 2.200L27.500 0.200V12.800H13ZM0.500 13.800H12V24.500L0.500 22.900ZM13 13.800H27.500V26.500L13 24.700Z" />
          </svg>
        </div>
        <div className="flex gap-[4px]">
          {apps.map(([icon, box], i) => (
            <div key={i} className={`flex h-[38px] w-[58px] items-center justify-center ${box}`}>
              {icon}
            </div>
          ))}
        </div>
        <div className="ml-auto flex items-center text-white">
          <div className="flex h-[33px] w-[56px] items-center justify-center rounded-[3px] border-2 border-[#3c3d3f] bg-linear-to-b from-[#6b6b6b] from-0% via-[#222] via-49% to-black to-50% font-['Open_Sans'] text-[15px] tracking-[-0.3px] text-[#e8eef8]">
            Secteur
          </div>
          <svg className="ml-[10px] h-[18px] w-[11px]" viewBox="0 0 11 18">
            <circle cx="4" cy="3.500" r="2" fill="#5d5344" />
            <path d="M1 15L5.500 9L10 15Z" fill="#fff" stroke="#54493a" strokeWidth="0.700" />
          </svg>
          <svg className="ml-[11px] h-[14px] w-[17px]" viewBox="0 0 17 14" fill="#fff" stroke="#4c4437" strokeWidth="0.800">
            <path d="M0.500 10.500H3.500V13.500H0.500ZM3.700 8.500H6.700V13.500H3.700ZM7 6H10V13.500H7ZM10.200 3.500H13.200V13.500H10.200ZM13.400 0.800H16.400V13.500H13.400Z" />
          </svg>
          <svg className="ml-[8px] h-[17px] w-[16px]" viewBox="0 0 16 17">
            <rect x="8" y="3" width="6" height="12" fill="#8b8172" stroke="#fff" strokeWidth="1.800" />
            <rect x="9.500" y="0.500" width="3" height="2" fill="#fff" />
            <path d="M2 1V4M5 1V4M0.500 5.500H6.500M1.500 7.500H5.500M3.500 8V15" fill="none" stroke="#fff" strokeWidth="1.500" />
          </svg>
          <svg className="ml-[8px] h-[16px] w-[16px]" viewBox="0 0 16 16" fill="#fff" stroke="#4c4437" strokeWidth="0.700">
            <path d="M1 0.500H3V15.500H1ZM3 1.500Q6 0 9 2V8.500Q6 7 3 8.500ZM9 4Q12 5.500 15.500 4L13.500 7L14.500 9.500Q11 10 9 8.500Z" />
          </svg>
          <span className="ml-[14px] w-[22px] font-['Open_Sans'] text-[11.500px] tracking-[-0.2px]">FRA</span>
          <div className="mr-[19px] ml-[17px] w-[58px] text-center font-['Open_Sans'] text-[11.500px] leading-[17px] tracking-[-0.4px] whitespace-nowrap">
            <div>12:26</div>
            <div>13/12/2014</div>
          </div>
        </div>
      </footer>
    </div>
  );
}
